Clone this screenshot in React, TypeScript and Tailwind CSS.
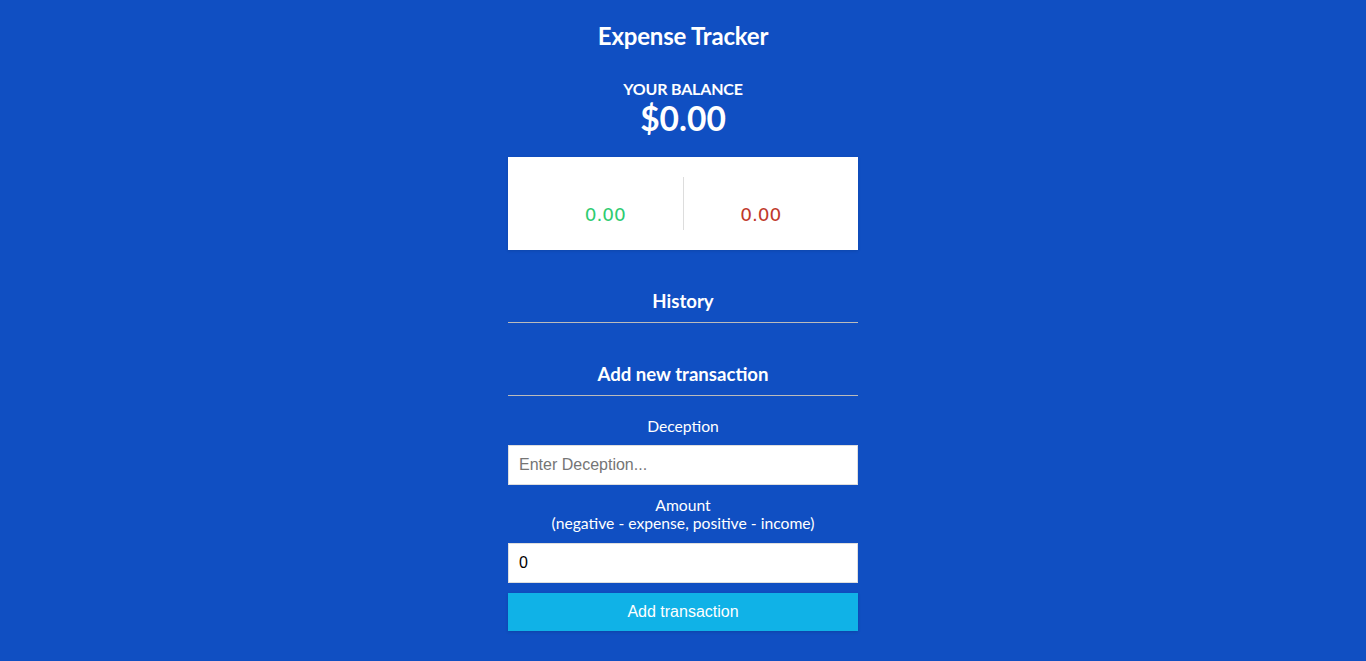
import React, { useState } from 'react';

export default function App() {
  const [text, setText] = useState('');
  const [amount, setAmount] = useState('0');

  return (
    <div className="min-h-screen bg-[#104fc2] flex justify-center" style={{ fontFamily: 'Lato, sans-serif' }}>
      <div className="w-[350px] flex flex-col">
        <h2 className="mt-[21px] text-center text-[24px] leading-[30px] font-bold text-white tracking-[-0.2px]">
          Expense Tracker
        </h2>

        <h4 className="mt-[29px] text-center text-[16px] leading-[18px] font-bold text-white uppercase tracking-[-0.2px]">
          Your Balance
        </h4>
        <h1 className="mt-[1px] text-center text-[33.5px] leading-[38px] font-bold text-white">$0.00</h1>

        <div className="mt-[20px] h-[93px] bg-white shadow-[0_1px_3px_rgba(0,0,0,0.12)] flex items-stretch p-[20px]">
          <div className="flex-1 flex items-end justify-center border-r border-[#dddddd] pb-[4px]">
            <p className="text-[18.5px] leading-[22px] text-[#2ecc71]" style={{ fontFamily: '"DejaVu Sans", Verdana, sans-serif' }}>
              0.00
            </p>
          </div>
          <div className="flex-1 flex items-end justify-center pb-[4px]">
            <p className="text-[18.5px] leading-[22px] text-[#c0392b]" style={{ fontFamily: '"DejaVu Sans", Verdana, sans-serif' }}>
              0.00
            </p>
          </div>
        </div>

        <h3 className="mt-[40px] text-center text-[18.6px] leading-[22px] font-bold text-white pb-[10px] border-b border-[#bbbbbb]">
          History
        </h3>
        <ul className="h-[30px]"></ul>

        <h3 className="mt-[10px] text-center text-[18.6px] leading-[22px] font-bold text-white pb-[10px] border-b border-[#bbbbbb]">
          Add new transaction
        </h3>

        <form className="flex flex-col" onSubmit={(e) => e.preventDefault()}>
          <label className="mt-[20px] text-center text-[15.7px] leading-[20px] text-white">Deception</label>
          <input
            type="text"
            value={text}
            onChange={(e) => setText(e.target.value)}
            placeholder="Enter Deception..."
            className="mt-[9px] h-[40px] w-full bg-white border border-[#dedede] px-[10px] text-[16px] text-black placeholder:text-[#757575] outline-none"
            style={{ fontFamily: '"Liberation Sans", Arial, sans-serif' }}
          />
          <label className="mt-[11px] text-center text-[15.7px] leading-[18px] text-white">
            Amount
            <br />
            (negative - expense, positive - income)
          </label>
          <input
            type="number"
            value={amount}
            onChange={(e) => setAmount(e.target.value)}
            className="mt-[11px] h-[40px] w-full bg-white border border-[#dedede] px-[10px] text-[16px] text-black outline-none"
            style={{ fontFamily: '"Liberation Sans", Arial, sans-serif' }}
          />
          <button
            className="mt-[10px] h-[38px] w-full bg-[#10b2e7] text-white text-[16px] shadow-[0_1px_3px_rgba(0,0,0,0.15)]"
            style={{ fontFamily: '"Liberation Sans", Arial, sans-serif' }}
          >
            Add transaction
          </button>
        </form>
      </div>
    </div>
  );
}
